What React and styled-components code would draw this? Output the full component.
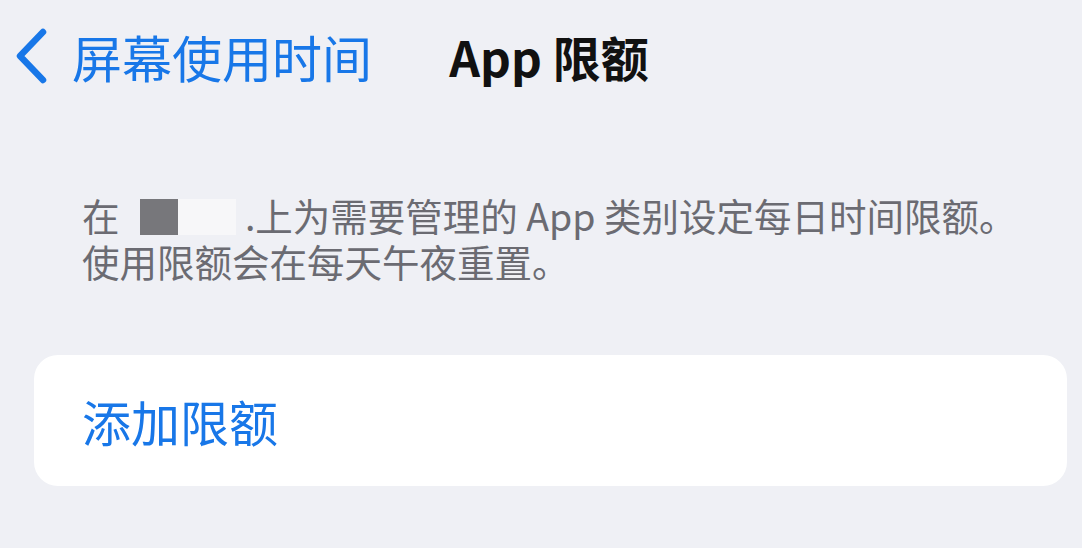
import React from "react";
import styled, { createGlobalStyle } from "styled-components";

const GlobalStyle = createGlobalStyle`
	html, body {
		margin: 0;
		padding: 0;
		background: #eff0f5;
	}
	body {
		font-family: "Noto Sans CJK SC", "Noto Sans", sans-serif;
	}
`;

const Screen = styled.div`
	width: 1082px;
	height: 548px;
	background: #eff0f5;
	overflow: hidden;
`;

const NavBar = styled.div`
	display: grid;
	grid-template-columns: 1fr auto 1fr;
	align-items: center;
	height: 112px;
`;

const BackButton = styled.div`
	display: flex;
	align-items: center;
	gap: 24px;
	padding-left: 14px;
	color: #1877e8;
	font-size: 50px;
	line-height: 1;
	white-space: nowrap;
`;

const Title = styled.div`
	font-size: 48px;
	font-weight: 700;
	color: #111;
	padding-left: 16px;
	white-space: nowrap;
`;

const Description = styled.p`
	margin: 80px 0 0 0;
	padding: 0 40px 0 82px;
	font-size: 37.5px;
	line-height: 46px;
	color: #6b6b72;
	white-space: nowrap;
`;

const Redaction = styled.span`
	display: inline-block;
	vertical-align: -4px;
	width: ${(p) => p.$w}px;
	height: 36px;
	margin-left: ${(p) => (p.$dark ? 12 : 0)}px;
	margin-right: ${(p) => (p.$dark ? 0 : 9)}px;
	background: ${(p) => (p.$dark ? "#77777b" : "#f7f7f9")};
`;

const Card = styled.div`
	display: flex;
	align-items: center;
	height: 131px;
	margin: 71px 15px 0 34px;
	padding-left: 48px;
	background: #fff;
	border-radius: 24px;
`;

const ActionLabel = styled.span`
	font-size: 49px;
	color: #1877e8;
`;

function Chevron() {
	return (
		<svg width="34" height="56" viewBox="0 0 34 56" fill="none">
			<path
				d="M29 4 L6 28 L29 52"
				stroke="#1877e8"
				strokeWidth="6.5"
				strokeLinecap="round"
				strokeLinejoin="round"
			/>
		</svg>
	);
}

export default function App() {
	return (
		<Screen>
			<GlobalStyle />
			<NavBar>
				<BackButton>
					<Chevron />
					屏幕使用时间
				</BackButton>
				<Title>App 限额</Title>
				<div />
			</NavBar>
			<Description>
				在 <Redaction $dark $w={38} />
				<Redaction $w={58} />.上为需要管理的 App 类别设定每日时间限额。
				<br />
				使用限额会在每天午夜重置。
			</Description>
			<Card>
				<ActionLabel>添加限额</ActionLabel>
			</Card>
		</Screen>
	);
}
